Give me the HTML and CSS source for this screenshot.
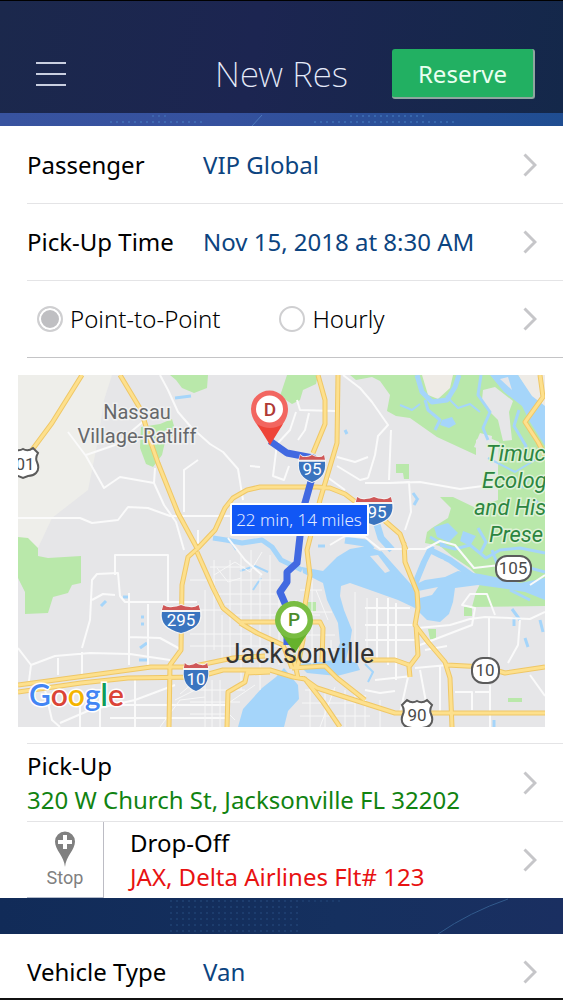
FILE: index.html
```html
<!DOCTYPE html>
<html lang="en">
<head>
    <meta charset="UTF-8">
    <meta name="viewport" content="width=device-width, initial-scale=1.0">
    <title>New Res</title>
    <link rel="stylesheet" href="styles.css">
</head>
<body>
    <svg class="sprite" aria-hidden="true">
        <symbol id="chevron" viewBox="0 0 14 24">
            <path d="M1.5 1.5L12 12L1.5 22.5" fill="none" stroke="#c6c6c9" stroke-width="3"/>
        </symbol>
        <symbol id="interstate" viewBox="0 0 30 32" preserveAspectRatio="none">
            <path d="M3 1Q6 4 9 3Q12 3 15 1Q18 3 21 3Q24 4 27 1L29 8C30 20 26 27 15 31C4 27 0 20 1 8Z" fill="#f4f4f4"/>
            <path d="M3 2Q6 5 9 4Q12 4 15 2Q18 4 21 4Q24 5 27 2L28 7H2Z" fill="#cf5757"/>
            <path d="M2 9H28C29 20 25 26 15 30C5 26 1 20 2 9Z" fill="#3a74bf"/>
        </symbol>
        <symbol id="us-route" viewBox="0 0 34 34">
            <path d="M7 2Q12 6 17 3Q22 6 27 2L32 7Q29 12 31 16Q34 23 30 27Q27 30 22 30L17 32L12 30Q7 30 4 27Q0 23 3 16Q5 12 2 7Z" fill="#fff" stroke="#5b5b5b" stroke-width="2"/>
        </symbol>
        <pattern id="dots" width="6" height="6" patternUnits="userSpaceOnUse">
            <circle cx="3" cy="3" r="1" fill="#4f8fd0"/>
        </pattern>
    </svg>

    <div class="app">
        <header class="topbar">
            <button class="menu" type="button" aria-label="Menu">
                <svg width="30" height="26" viewBox="0 0 30 26"><path d="M0 2H30M0 13H30M0 24H30" stroke="#c9cfe0" stroke-width="2"/></svg>
            </button>
            <h1>New Res</h1>
            <button class="reserve" type="submit" form="reservation">Reserve</button>
        </header>

        <div class="strip strip-light">
            <svg width="563" height="13" aria-hidden="true">
                <rect x="107" y="6" width="98" height="6" fill="url(#dots)" opacity=".5"/>
                <rect x="150" y="0" width="18" height="6" fill="url(#dots)" opacity=".4"/>
                <rect x="310" y="6" width="148" height="6" fill="url(#dots)" opacity=".5"/>
                <rect x="350" y="0" width="78" height="6" fill="url(#dots)" opacity=".5"/>
                <path d="M252 13L262 2" stroke="#4d79bb"/>
            </svg>
        </div>

        <form id="reservation" class="form">
            <a class="row" href="#passenger">
                <span class="label">Passenger</span>
                <span class="value">VIP Global</span>
                <svg class="chevron"><use href="#chevron"/></svg>
            </a>
            <a class="row" href="#time">
                <span class="label">Pick-Up Time</span>
                <span class="value">Nov 15, 2018 at 8:30 AM</span>
                <svg class="chevron"><use href="#chevron"/></svg>
            </a>
            <div class="row row-type">
                <label class="option"><input type="radio" name="service" checked>Point-to-Point</label>
                <label class="option"><input type="radio" name="service">Hourly</label>
                <svg class="chevron"><use href="#chevron"/></svg>
            </div>

            <div class="map">
                <svg viewBox="18 375 527 352" role="img" aria-label="Route map">
                    <defs>
                        <path id="highways" d="M82 375L52 423L32 450M120 375L141 410L151 443L158 463L178 513L198 550
                            M406 550L400 534L385 521L365 509L345 494L330 488L317 487H260L247 490L233 498L225 508L215 530L198 548L188 557L182 585L181 650L170 665L169 727
                            M404 543L405 562L417 592L418 608L415 625L428 642L445 662L450 678L452 727M416 625L418 655L409 667L410 677M409 665L395 660H365
                            M318 375L325 400V424L313 453M338 375L337 443L320 500L307 550L310 575L305 605L303 640L297 670
                            M197 552L213 588L223 608L240 622H320L323 628L322 662M240 623L257 633L283 645L292 668
                            M18 685L85 676L151 667H190L233 658L265 656M18 692L81 683L128 678L198 677L223 670H270L293 677L305 679L323 702L340 727
                            M303 678L317 688L370 705L395 713H545M292 668L325 666L337 678L365 700M293 655L298 678M270 672L247 673L245 682L228 692L227 727
                            M447 665L485 667L505 673L545 667M540 375L543 397L525 422L538 442L545 455"/>
                    </defs>

                    <rect x="18" y="375" width="527" height="352" fill="#e6e6e8"/>
                    <path d="M18 375H112L104 400L98 440L88 490L52 518L38 548H18Z" fill="#eeeeea"/>

                    <!-- parks -->
                    <g fill="#b9e8aa">
                        <path d="M170 375H208L207 388L194 393L182 388L176 380Z"/>
                        <path d="M141 427L160 424L172 419L176 433L165 442L162 455L153 467L146 464L140 448Z"/>
                        <path d="M287 375H318L316 384L303 390L300 400L292 404L280 396Z"/>
                        <path d="M350 375H545V606L472 607L476 592L482 580L470 568L452 556L440 546L425 543L427 532L432 528L448 518L451 508L440 497L453 497L476 508L498 500V470L499 442L483 435L476 440V455L437 437L410 418L396 416L387 411L390 395L380 381L372 377L356 380Z"/>
                        <path d="M18 537L28 538L38 548V556L48 558L81 556V583L72 585L68 593L53 597L48 613L25 614V592L18 578Z"/>
                        <path d="M307 602H316V611L304 612Z"/>
                        <path d="M464 607H472V616H464Z"/>
                        <path d="M428 629H436V639H430Z"/>
                        <path d="M508 698H522V702H508Z"/>
                        <path d="M396 464H409V479H404L403 473H396Z"/>
                    </g>
                    <g fill="#e6e6e8">
                        <path d="M483 390L495 387L513 401L509 412L512 440L503 441L498 420L490 412L482 400Z"/>
                        <path d="M474 447L480 433L492 436L490 453Z"/>
                    </g>
                    <path d="M422 375H453L450 388L438 399L428 395ZM518 375H545V408L530 396Z" fill="#eeebe6"/>

                    <!-- water -->
                    <g fill="#a5d5fa">
                        <path d="M490 375H518L532 396L545 406V446L530 422L522 406L504 392Z"/>
                        <path d="M442 420L452 417L456 424L449 428L440 425Z"/>
                        <path d="M434 527L448 523L458 533L449 542L437 537Z"/>
                        <path d="M463 531L476 536L470 546L460 541Z"/>
                        <path d="M284 668L298 685L299 699L288 711L284 727H238L243 709L262 688L276 677Z"/>
                        <path d="M302 567L323 571L337 557L350 549L367 546L382 552L398 572L412 586L425 580L445 577L458 571L480 574L500 578L520 583L545 578V600L525 592L500 588L478 585L455 588L453 602L449 614L440 622L427 620L415 608L398 600L370 590L350 583L341 586L340 596L344 610L352 630L350 643L346 660L357 663L360 670L337 676L307 673L298 664L310 663L333 660L340 643L338 623L327 600L323 583L303 573Z"/>
                    </g>
                    <g fill="none" stroke="#a5d5fa" stroke-linejoin="round">
                        <path d="M417 375L422 392L432 402L447 400L455 387L459 375" stroke-width="5"/>
                        <path d="M415 584L424 562L432 546M428 549L450 560L478 580M379 553L412 590" stroke-width="6"/>
                        <path d="M481 375L478 395L490 412L483 428L488 440M519 410L514 426L526 446L520 462M435 430L440 420L428 410L425 400" stroke-width="3"/>
                        <path d="M375 518L381 538L392 550M345 540L365 543L372 550" stroke-width="7"/>
                        <path d="M213 538L226 540L242 543L262 540L272 547L281 560L302 570" stroke-width="5"/>
                        <path d="M240 571L255 566L268 572M229 538L236 550M253 590L261 578M365 664L373 672L368 682M446 396L458 408L470 404L480 412M488 458L515 472L535 460M400 405L412 410L420 404" stroke-width="2"/>
                        <path d="M440 545L455 549L470 545L486 558L500 550L520 548L545 553M430 537L446 546M478 528L486 542L481 552M492 550L498 566M522 488L530 475M535 500L545 510M520 577L530 568L545 572M510 590L530 600M512 609L520 620M514 617V626M525 638L528 647M540 620L543 632" stroke-width="3"/>
                        <path d="M101 606L106 601M141 617H144M141 624H144M140 648L147 643M139 660H148M123 597H128M175 398L191 396M345 430L347 434M413 493L418 500M418 498L414 505M318 546H325M494 727V720" stroke-width="3"/>
                    </g>
                    <path d="M370 556L378 555L390 571L385 573ZM500 379L512 390L508 377ZM418 591L438 587L432 595L420 598ZM438 558L444 560L441 565Z" fill="#e6e6e8"/>

                    <!-- streets -->
                    <g fill="none" stroke="#fafafa" stroke-width="2" stroke-linejoin="round">
                        <path d="M160 375L168 390L178 412L191 427L210 444L223 452L238 469L243 500"/>
                        <path d="M68 432L86 456L104 488L120 477L154 483L155 468M86 455L115 445L145 420M154 483L164 505L176 522L184 550"/>
                        <path d="M18 518H80L92 523L118 520L128 507L148 508L170 516H198M184 512V470L198 460M178 516H220M190 516H235"/>
                        <path d="M297 400L300 410L335 411M296 412L290 430L277 444L273 476L284 480L289 466M309 413L305 430L298 440M337 457L355 462L368 457M337 466L360 480L368 478M327 477L345 490M343 375L360 388L372 402L388 425L378 436L375 455L368 478M391 430L389 480M365 483L390 483L420 482L460 489L498 484M389 483L409 482L411 512L405 530"/>
                        <path d="M250 466L260 467M330 545L345 536L365 537L380 549H425L440 541L455 545L474 568L500 565M198 530V548M228 538L245 560L262 575"/>
                        <path d="M18 648L31 665L55 656L90 653L130 654L170 660M82 652V675M82 648L90 620L92 580L97 574L118 573L120 596L125 602L197 602M92 600L103 594L115 595M115 575V555L168 555V602M129 593V665M129 637L160 638L182 650M148 604V667M58 658V675M31 665L29 681"/>
                        <path d="M45 690L52 720L60 727M60 723L90 710L135 700L175 685M80 700V727M100 690V727M135 680V727M110 705H227M110 718H227"/>
                        <path d="M388 598V665M377 598V660M365 608H410M365 625H415M365 640H415M396 603V680M418 628L450 625L470 619L485 617L530 619L545 612M420 645L472 625L475 608L462 605L470 594H487L495 615M489 618V657M520 620L518 645L508 663M447 646L425 650M415 668L448 665M375 680L412 676M408 677L400 713M420 670L428 713M440 665V713M455 692H472V710M490 685V727M530 675L545 696M530 585L545 575M365 690L380 693L395 691M475 692H490"/>
                    </g>
                    <g fill="none" stroke="#f7f7f7" stroke-width="1">
                        <path d="M205 590V727M214 560V650M222 615V660M230 560V660M241 555V690M251 550V660M260 575V690M270 555V650M279 590V665M296 600V640M312 580V665M331 640V655M316 590L328 620"/>
                        <path d="M190 580H213M210 567H245M214 580H280M215 594H275M190 610H223M225 604H285M190 634H250M190 646H280M235 615H320M300 590H322M303 612H332M303 635H335M303 650H335"/>
                        <path d="M190 690H245M190 702H240M190 714H227M212 680V727M220 680V727M230 702L255 685M235 720L225 710M305 690H335M302 703H355M300 716H370M310 682V727M325 690V727M345 690V727M355 690V727M365 695V727M380 700V727M335 687L320 727"/>
                        <path d="M214 575L235 562L250 572L262 552M217 568L228 582L241 578M175 700L205 685M180 694L192 684M160 727L180 700L205 697M355 592V660M367 598V660"/>
                    </g>

                    <!-- highways: casing first, lighter fill on top -->
                    <use href="#highways" class="highway-casing"/>
                    <use href="#highways" class="highway-fill"/>

                    <!-- route -->
                    <path d="M270 441L287 453L313 458L312 478L303 510L299 545L297 563L287 572V582L280 592L287 608V645" fill="none" stroke="#4169e1" stroke-width="7" stroke-linejoin="round"/>

                    <!-- road signs -->
                    <use href="#interstate" x="297" y="453" width="30" height="31"/>
                    <use href="#interstate" x="353" y="495" width="42" height="32"/>
                    <use href="#interstate" x="159" y="603" width="44" height="32"/>
                    <use href="#interstate" x="182" y="661" width="28" height="32"/>
                    <use href="#us-route" x="6" y="446" width="34" height="34"/>
                    <use href="#us-route" x="400" y="698" width="34" height="34"/>
                    <rect x="496" y="556" width="35" height="25" rx="11" fill="#fff" stroke="#5b5b5b" stroke-width="2"/>
                    <rect x="472" y="658" width="27" height="25" rx="11" fill="#fff" stroke="#5b5b5b" stroke-width="2"/>
                    <g class="sign sign-blue">
                        <text x="312" y="475">95</text>
                        <text x="377" y="518">95</text>
                        <text x="181" y="626">295</text>
                        <text x="196" y="685">10</text>
                    </g>
                    <g class="sign">
                        <text x="25" y="470">01</text>
                        <text x="417" y="721">90</text>
                        <text x="513" y="574">105</text>
                        <text x="485" y="676">10</text>
                    </g>

                    <!-- places -->
                    <g class="place">
                        <text x="137" y="419">Nassau</text>
                        <text x="137" y="443">Village-Ratliff</text>
                    </g>
                    <g class="preserve">
                        <text x="486" y="461">Timuc</text>
                        <text x="482" y="488">Ecolog</text>
                        <text x="474" y="515">and His</text>
                        <text x="489" y="542">Prese</text>
                    </g>
                    <text class="google" x="29" y="706"><tspan fill="#4285f4">G</tspan><tspan fill="#db4437">o</tspan><tspan fill="#f4b400">o</tspan><tspan fill="#4285f4">g</tspan><tspan fill="#0f9d58">l</tspan><tspan fill="#db4437">e</tspan></text>

                    <!-- pins -->
                    <path d="M270 445C266 431 251 424 251 409A18.500 18.500 0 0 1 288 409C288 424 274 431 270 445Z" fill="#f26660"/>
                    <path d="M257 424Q270 432 283 424L270 445Z" fill="#ee4438"/>
                    <circle cx="269.500" cy="409" r="13.500" fill="#fff"/>
                    <text class="pin pin-d" x="270" y="416">D</text>
                    <path d="M295 652C291 640 275 634 275 620A19 19 0 0 1 313 620C313 634 298 640 295 652Z" fill="#79bd42"/>
                    <path d="M281 634Q294 643 307 634L295 653Z" fill="#66b22c"/>
                    <circle cx="294" cy="620" r="13.500" fill="#fff"/>
                    <text class="pin pin-p" x="294" y="626">P</text>
                    <text class="city" x="300" y="663">Jacksonville</text>

                    <rect x="231" y="504" width="137" height="31" rx="1" fill="#1157f5" stroke="#fff" stroke-width="2"/>
                    <text class="eta" x="299" y="526">22 min, 14 miles</text>
                </svg>
            </div>

            <a class="row row-place" href="#pickup">
                <span class="stack">
                    <span>Pick-Up</span>
                    <span class="pickup">320 W Church St, Jacksonville FL 32202</span>
                </span>
                <svg class="chevron"><use href="#chevron"/></svg>
            </a>
            <div class="row row-drop">
                <button class="stop" type="button">
                    <svg width="22" height="36" viewBox="0 0 22 36" aria-hidden="true">
                        <path d="M11 36C10 25 1 19 1 10.500A10 10 0 0 1 21 10.500C21 19 12 25 11 36Z" fill="#808080"/>
                        <path d="M11 4V18M4 11H18" stroke="#fff" stroke-width="4"/>
                    </svg>
                    Stop
                </button>
                <a class="drop-link" href="#dropoff">
                    <span class="stack">
                        <span>Drop-Off</span>
                        <span class="dropoff">JAX, Delta Airlines Flt# 123</span>
                    </span>
                    <svg class="chevron"><use href="#chevron"/></svg>
                </a>
            </div>
        </form>

        <div class="strip strip-dark">
            <svg width="563" height="36" aria-hidden="true">
                <rect x="168" y="0" width="134" height="36" fill="url(#dots)" opacity=".2"/>
                <rect x="302" y="0" width="40" height="6" fill="url(#dots)" opacity=".15"/>
                <path d="M438 36Q470 14 508 1" fill="none" stroke="#315a8c"/>
            </svg>
        </div>

        <div class="form form-last">
            <a class="row" href="#vehicle">
                <span class="label">Vehicle Type</span>
                <span class="value">Van</span>
                <svg class="chevron"><use href="#chevron"/></svg>
            </a>
        </div>
    </div>
</body>
</html>
```

FILE: styles.css
```css
* {
    margin: 0;
    padding: 0;
    box-sizing: border-box;
}

body {
    background: #fff;
    color: #000;
    font-family: 'Noto Sans', 'Open Sans', sans-serif;
    font-size: 24px;
    line-height: 34px;
}

a {
    color: inherit;
    text-decoration: none;
}

button {
    border: 0;
    background: transparent;
    font-family: inherit;
    cursor: pointer;
}

.sprite {
    position: absolute;
    width: 0;
    height: 0;
}

.app {
    border-top: 1px solid #000;
    border-bottom: 2px solid #111;
}

/* header */
.topbar {
    display: grid;
    grid-template-columns: 1fr auto 1fr;
    align-items: center;
    height: 112px;
    padding: 34px 28px 0;
    background: linear-gradient(100deg, #1b284c, #1c2551 45%, #14284a);
}

.topbar h1 {
    color: #e6ebfa;
    font-size: 35px;
    font-weight: 200;
    line-height: 48px;
}

.menu {
    display: flex;
    justify-self: start;
    margin-left: 8px;
}

.reserve {
    justify-self: end;
    width: 143px;
    height: 50px;
    background: #22b062;
    border-right: 2px solid #8da79f;
    border-bottom: 2px solid #8da79f;
    border-radius: 3px;
    color: #e9fff0;
    font-size: 24px;
}

.strip {
    overflow: hidden;
}

.strip svg {
    display: block;
}

.strip-light {
    height: 13px;
    background: linear-gradient(90deg, #38539f, #35519e 40%, #1f4d91);
}

.strip-dark {
    height: 36px;
    background: linear-gradient(90deg, #112b58, #15305f 60%, #1a2f61);
}

/* rows */
.row {
    display: flex;
    align-items: center;
    height: 77px;
    margin-left: 27px;
    padding-right: 26px;
}

.row + .row {
    border-top: 1px solid #e4e4e6;
}

.label {
    width: 176px;
}

.value {
    color: #0c4480;
}

.chevron {
    width: 14px;
    height: 24px;
    margin-left: auto;
    flex-shrink: 0;
}

.row-type {
    font-weight: 300;
    padding-left: 10px;
    gap: 59px;
}

.option {
    display: flex;
    align-items: center;
    gap: 7px;
}

.option input {
    appearance: none;
    width: 26px;
    height: 26px;
    border: 2px solid #cfcfd1;
    border-radius: 50%;
    background: #fff;
}

.option input:checked {
    background: #bfbfc2;
    border-color: #cfcfd1;
    box-shadow: inset 0 0 0 2px #fff;
}

.map {
    padding: 18px 18px 16px;
    background: linear-gradient(#c4c4c6, #c4c4c6) 27px 0 / 100% 1px no-repeat;
}

.map svg {
    display: block;
    width: 100%;
    height: auto;
}

.highway-casing,
.highway-fill {
    fill: none;
    stroke: #efc766;
    stroke-width: 5px;
    stroke-linejoin: round;
}

.highway-fill {
    stroke: #fde08d;
    stroke-width: 3px;
}

.map text {
    font-family: Roboto, 'Liberation Sans', sans-serif;
}

.sign text {
    font-size: 17px;
    text-anchor: middle;
    fill: #4a4a4a;
}

.sign-blue text {
    fill: #fff;
}

.place text {
    font-size: 20px;
    text-anchor: middle;
    fill: #66686a;
    stroke: #f1f1f1;
    stroke-width: 3px;
    paint-order: stroke;
}

.preserve text {
    font-size: 22px;
    font-style: italic;
    fill: #2c8540;
    stroke: #dff2d8;
    stroke-width: 3px;
    paint-order: stroke;
}

.map .city {
    font-size: 27px;
    text-anchor: middle;
    fill: #333;
}

.map .google {
    font-family: Lato, sans-serif;
    font-size: 30px;
    font-weight: 600;
    stroke: #fff;
    stroke-width: 3px;
    paint-order: stroke;
}

.map .pin {
    font-size: 19px;
    font-weight: 500;
    text-anchor: middle;
}

.pin-d {
    fill: #b03a35;
}

.pin-p {
    fill: #4d8c2a;
}

.map .eta {
    font-family: 'Noto Sans', sans-serif;
    font-size: 17px;
    font-weight: 300;
    text-anchor: middle;
    fill: #e3ebff;
}

/* addresses */
.row-place {
    border-top: 1px solid #e4e4e6;
    height: 78px;
}

.stack {
    display: flex;
    flex-direction: column;
}

.pickup {
    color: #118311;
}

.dropoff {
    color: #e81212;
}

.row-drop {
    align-items: stretch;
}

.stop {
    display: flex;
    flex-direction: column;
    align-items: center;
    justify-content: center;
    width: 77px;
    border-right: 1px solid #bcbcc4;
    border-bottom: 1px solid #b4bccb;
    color: #808080;
    font-family: Roboto, sans-serif;
    font-size: 18px;
    line-height: 22px;
}

.drop-link {
    display: flex;
    align-items: center;
    flex: 1;
    padding-left: 26px;
}

.form-last .row {
    height: 64px;
    padding-top: 12px;
}
```
